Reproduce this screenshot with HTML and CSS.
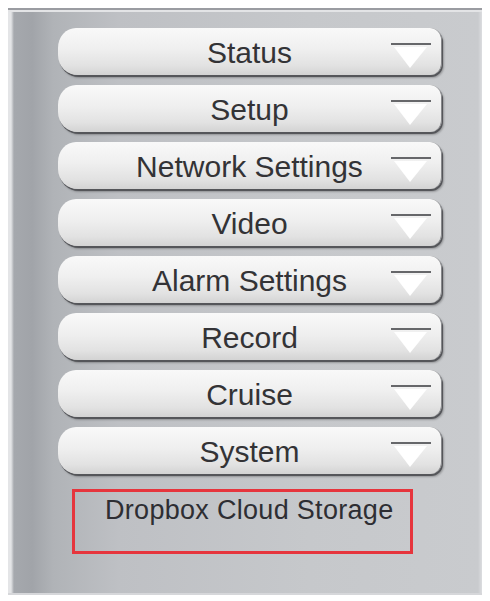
FILE: index.html
```html
<!DOCTYPE html>
<html>
<head>
<meta charset="utf-8">
<link rel="stylesheet" href="styles.css">
</head>
<body>
<div class="panel">
  <ul class="menu">
    <li class="menu-btn"><span>Status</span><svg class="arrow" viewBox="0 0 42 26" width="42" height="26"><line x1="0" y1="1" x2="40" y2="1"/><polygon points="3,4 36,4 19,25"/></svg></li>
    <li class="menu-btn"><span>Setup</span><svg class="arrow" viewBox="0 0 42 26" width="42" height="26"><line x1="0" y1="1" x2="40" y2="1"/><polygon points="3,4 36,4 19,25"/></svg></li>
    <li class="menu-btn"><span>Network Settings</span><svg class="arrow" viewBox="0 0 42 26" width="42" height="26"><line x1="0" y1="1" x2="40" y2="1"/><polygon points="3,4 36,4 19,25"/></svg></li>
    <li class="menu-btn"><span>Video</span><svg class="arrow" viewBox="0 0 42 26" width="42" height="26"><line x1="0" y1="1" x2="40" y2="1"/><polygon points="3,4 36,4 19,25"/></svg></li>
    <li class="menu-btn"><span>Alarm Settings</span><svg class="arrow" viewBox="0 0 42 26" width="42" height="26"><line x1="0" y1="1" x2="40" y2="1"/><polygon points="3,4 36,4 19,25"/></svg></li>
    <li class="menu-btn"><span>Record</span><svg class="arrow" viewBox="0 0 42 26" width="42" height="26"><line x1="0" y1="1" x2="40" y2="1"/><polygon points="3,4 36,4 19,25"/></svg></li>
    <li class="menu-btn"><span>Cruise</span><svg class="arrow" viewBox="0 0 42 26" width="42" height="26"><line x1="0" y1="1" x2="40" y2="1"/><polygon points="3,4 36,4 19,25"/></svg></li>
    <li class="menu-btn"><span>System</span><svg class="arrow" viewBox="0 0 42 26" width="42" height="26"><line x1="0" y1="1" x2="40" y2="1"/><polygon points="3,4 36,4 19,25"/></svg></li>
  </ul>
  <div class="dropbox">Dropbox Cloud Storage</div>
</div>
</body>
</html>
```

FILE: styles.css
```css
html, body {
  background: #ffffff;
}
body {
  margin: 8px;
  font-family: "Liberation Sans", Arial, sans-serif;
}
.panel {
  box-sizing: border-box;
  width: 474px;
  height: 587px;
  padding: 18px 0 0 50px;
  border-top: 2px solid #9a9ca1;
  background: linear-gradient(to right, #e4e5e7 0, #e4e5e7 3px, #a5a8ad 6px, #a1a4a9 24px, #b0b3b7 45px, #bec0c4 110px, #c6c8cb 300px, #c9cbce 470px, #dcdde0 474px);
  box-shadow: inset 0 2px 0 #e3e4e6, inset 0 -2px 0 #d6d7da;
}
.menu {
  list-style: none;
  margin: 0;
  padding: 0;
  width: 384px;
  display: flex;
  flex-direction: column;
  gap: 10px;
}
.menu-btn {
  position: relative;
  box-sizing: border-box;
  height: 47px;
  padding-top: 3px;
  display: flex;
  align-items: center;
  justify-content: center;
  border-radius: 18px 12px 12px 20px / 20px 12px 12px 20px;
  background: linear-gradient(to bottom, #f9f9f9 0%, #efefef 45%, #e2e2e2 80%, #d3d3d3 100%);
  box-shadow: 1px 2px 0 #55565a, 2px 3px 2px rgba(0, 0, 0, 0.25);
  border-right: 1px solid #86878a;
  font-size: 30px;
  line-height: 44px;
  color: #333336;
}
.arrow {
  position: absolute;
  top: 15px;
  right: 8px;
}
.arrow line {
  stroke: #66676a;
  stroke-width: 2;
}
.arrow polygon {
  fill: #ffffff;
}
.dropbox {
  box-sizing: border-box;
  width: 341px;
  height: 65px;
  margin: 15px 0 0 14px;
  padding: 3px 0 0 30px;
  border: 3px solid #e6353d;
  font-size: 27px;
  letter-spacing: 0.3px;
  line-height: 30px;
  color: #2e2e33;
}
```
